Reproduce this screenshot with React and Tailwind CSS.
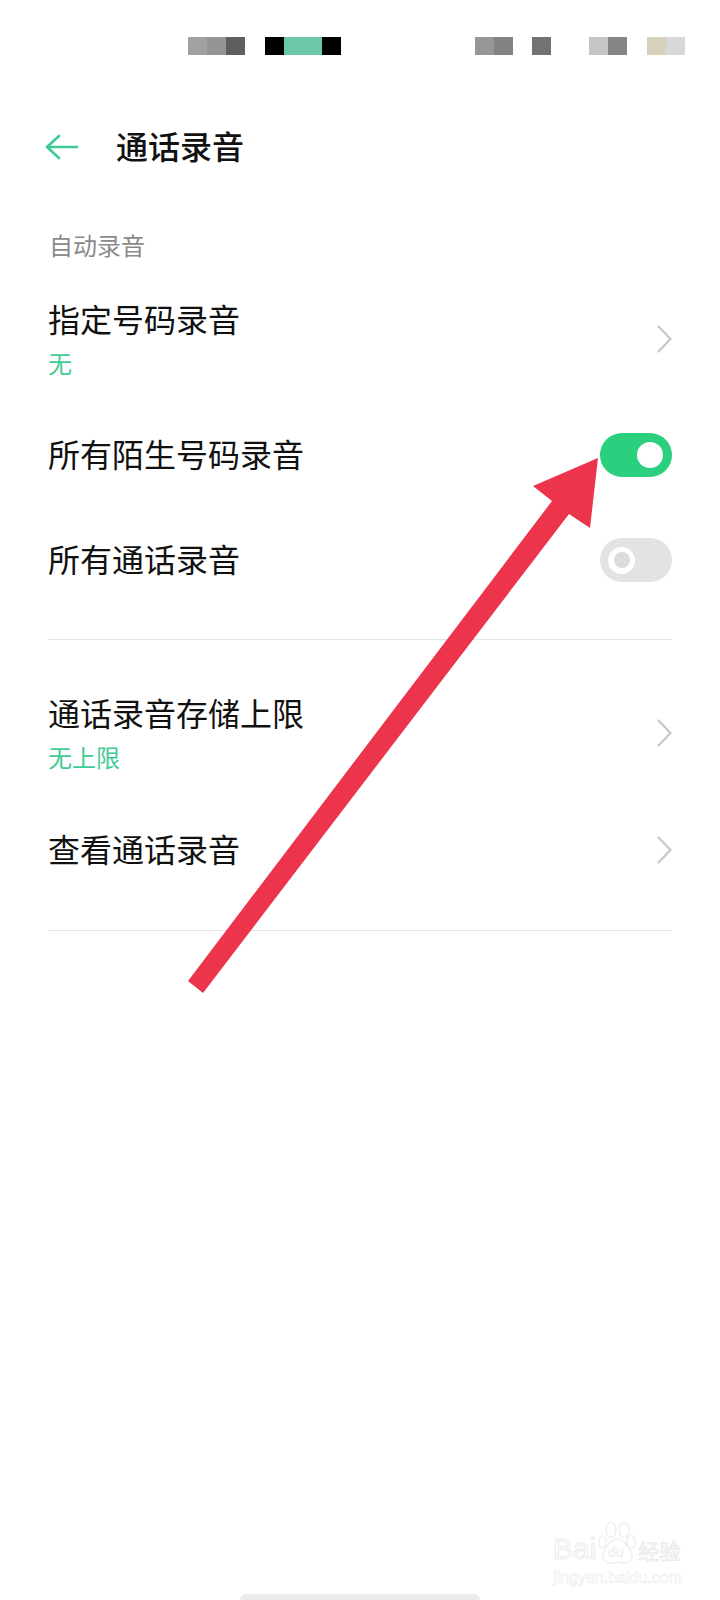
function Blocks({ colors, className = "" }) {
    return (
        <div className={`flex ${className}`}>
            {colors.map((c, i) => (
                <div key={i} className="h-[18px]" style={{ width: c[1], backgroundColor: c[0] }}></div>
            ))}
        </div>
    );
}

function Chevron() {
    return (
        <svg className="mt-[3px]" width="15" height="28" viewBox="0 0 15 28" fill="none" stroke="#c9c9c9" strokeWidth="2.4" strokeLinecap="round" strokeLinejoin="round">
            <path d="M1.5 1.5 L13.5 14 L1.5 26.5" />
        </svg>
    );
}

function Toggle({ on }) {
    if (on) {
        return (
            <div className="flex h-[44px] w-[72px] items-center justify-end rounded-full bg-[#2bd07f] pr-[9px]">
                <div className="h-[26px] w-[26px] rounded-full bg-white"></div>
            </div>
        );
    }
    return (
        <div className="flex h-[44px] w-[72px] items-center rounded-full bg-[#e3e3e3] pl-[8px]">
            <div className="flex h-[27px] w-[27px] items-center justify-center rounded-full bg-white">
                <div className="h-[16px] w-[16px] rounded-full bg-[#dcdcdc]"></div>
            </div>
        </div>
    );
}

function LinkRow({ title, sub, className }) {
    return (
        <div className={`flex items-center justify-between ${className}`}>
            <div>
                <div className="text-[32px] leading-[44px] text-[#111]">{title}</div>
                {sub && <div className="mt-[7px] text-[24px] leading-[32px] text-[#3ecb94]">{sub}</div>}
            </div>
            <Chevron />
        </div>
    );
}

function SwitchRow({ title, on, className }) {
    return (
        <div className={`flex items-center justify-between ${className}`}>
            <div className="-translate-y-[2px] text-[32px] leading-[44px] text-[#111]">{title}</div>
            <Toggle on={on} />
        </div>
    );
}

export default function App() {
    return (
        <div className="relative h-[1600px] w-[720px] overflow-hidden bg-white font-['Noto_Sans_CJK_SC','Noto_Sans',sans-serif]">
            <div className="flex pt-[37px] pl-[188px]">
                <Blocks colors={[["#a1a1a1", 19], ["#959595", 19], ["#5f5f5f", 19]]} />
                <Blocks className="ml-[20px]" colors={[["#000", 19], ["#6cc7a8", 38], ["#000", 19]]} />
                <Blocks className="ml-[134px]" colors={[["#969696", 19], ["#828282", 19]]} />
                <Blocks className="ml-[19px]" colors={[["#727272", 19]]} />
                <Blocks className="ml-[38px]" colors={[["#c5c5c5", 19], ["#858585", 19]]} />
                <Blocks className="ml-[20px]" colors={[["#d6d0bc", 19], ["#d8d8d8", 19]]} />
            </div>

            <div className="mt-[68px] flex items-center pl-[45px]">
                <svg className="mt-[3px]" width="34" height="26" viewBox="0 0 34 26" fill="none" stroke="#3ecb94" strokeWidth="2.6" strokeLinecap="round" strokeLinejoin="round">
                    <path d="M32 13 H3 M14 2 L2 13 L14 24" />
                </svg>
                <div className="ml-[37px] text-[32px] leading-[44px] font-medium text-[#111]">通话录音</div>
            </div>

            <div className="mt-[61px] px-[48px]">
                <div className="pl-[1px] text-[24px] leading-[34px] text-[#8a8a8a]">自动录音</div>

                <LinkRow className="mt-[34px]" title="指定号码录音" sub="无" />
                <SwitchRow className="mt-[54px]" title="所有陌生号码录音" on />
                <SwitchRow className="mt-[61px]" title="所有通话录音" on={false} />

                <div className="mt-[57px] h-px bg-[#e4e4e4]"></div>

                <LinkRow className="mt-[50px]" title="通话录音存储上限" sub="无上限" />
                <LinkRow className="mt-[53px]" title="查看通话录音" />

                <div className="mt-[60px] h-px bg-[#e4e4e4]"></div>
            </div>

            {/* annotation arrow on top of the page */}
            <svg className="absolute top-0 left-0" width="720" height="1600" viewBox="0 0 720 1600">
                <polygon fill="#ec344c" points="188,981 203,993 569,514 590,528 598,458 533,486 552,501" />
            </svg>

            {/* baidu watermark */}
            <div className="absolute top-[1522px] left-[553px] w-[130px] text-[#fefefe]">
                <div className="flex items-end">
                    <span className="text-[30px] leading-[30px] font-['Liberation_Sans',sans-serif] [-webkit-text-stroke:1px_#ececec]">Bai</span>
                    <svg width="38" height="42" viewBox="0 0 38 42" fill="none" stroke="#ececec" strokeWidth="1.2" className="ml-[2px]">
                        <ellipse cx="13" cy="8" rx="5" ry="7.5" />
                        <ellipse cx="26" cy="8" rx="5" ry="7.5" />
                        <ellipse cx="33" cy="20" rx="4" ry="6.5" />
                        <ellipse cx="4.5" cy="20" rx="3.5" ry="6" />
                        <path d="M19 17 C26 17 35 30 34 35 C33 42 25 42 19 40 C13 42 6 42 5 35 C4 30 12 17 19 17 Z" />
                        <text x="10" y="35" fontSize="14" fontFamily="Liberation Sans" strokeWidth="0.6">du</text>
                    </svg>
                    <span className="ml-[2px] text-[21px] leading-[28px] [-webkit-text-stroke:1px_#ececec]">经验</span>
                </div>
                <div className="mt-[7px] text-[16px] leading-[14px] whitespace-nowrap font-['Liberation_Sans',sans-serif] [-webkit-text-stroke:0.6px_#eeeeee]">jingyan.baidu.com</div>
            </div>

            {/* home indicator */}
            <div className="absolute bottom-0 left-[240px] h-[6px] w-[240px] rounded-t-full bg-[#ebebeb]"></div>
        </div>
    );
}
